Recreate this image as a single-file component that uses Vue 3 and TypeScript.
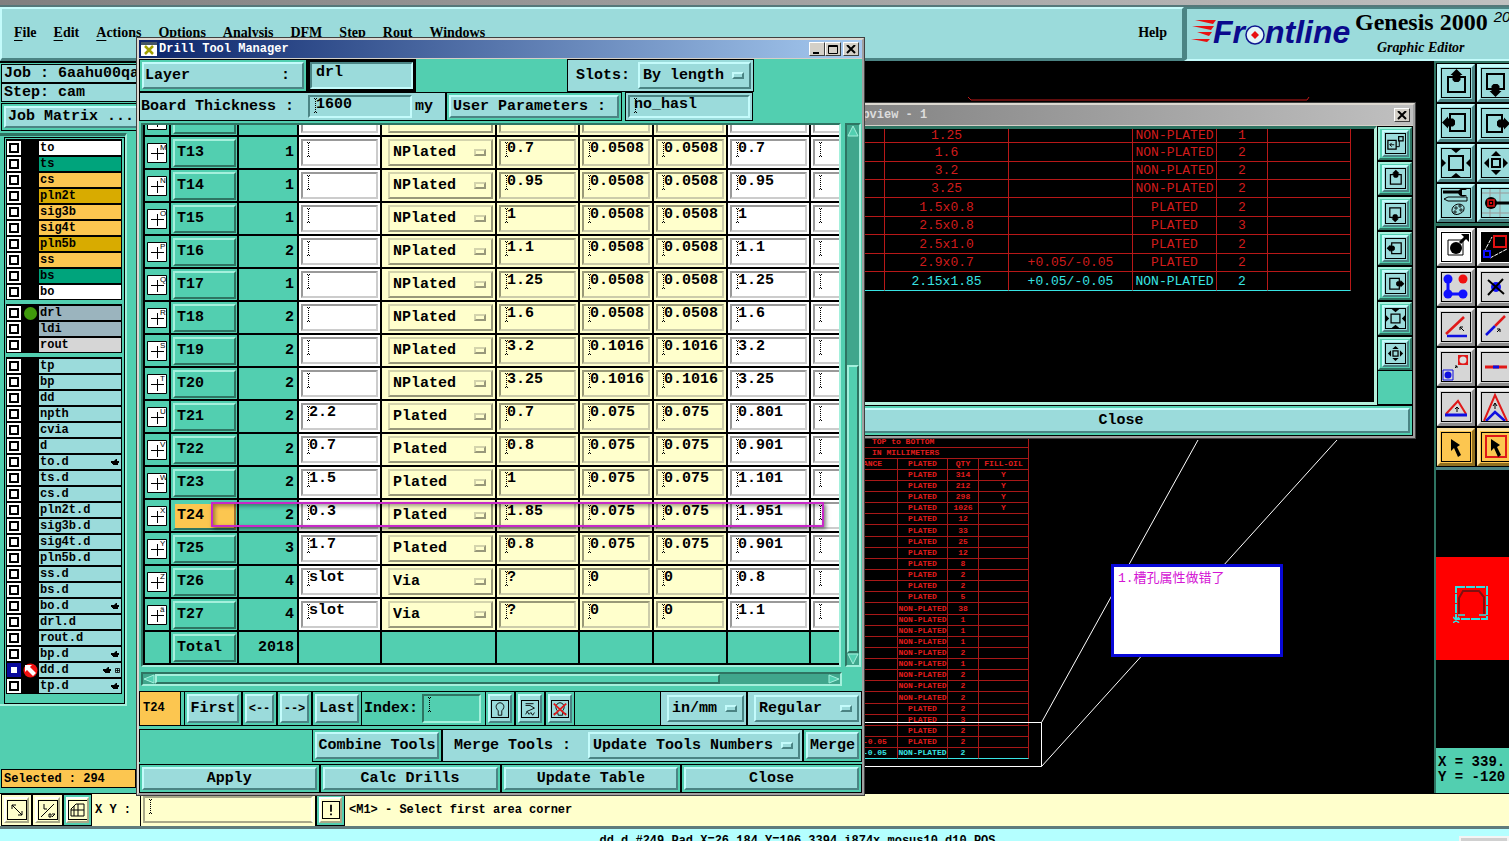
<script setup lang="ts">
import { reactive } from 'vue'

interface Layer { name: string; tone: string; mark?: string; hand?: boolean; grid?: boolean }
interface Drill { id: string; sym: string; count: number; a: string; type: string; b: string; c: string; d: string; e: string }

const menus = ['File', 'Edit', 'Actions', 'Options', 'Analysis', 'DFM', 'Step', 'Rout', 'Windows']

const groups: Layer[][] = [
  [
    { name: 'to', tone: 'white' }, { name: 'ts', tone: 'green' }, { name: 'cs', tone: 'amber' },
    { name: 'pln2t', tone: 'gold' }, { name: 'sig3b', tone: 'amber' }, { name: 'sig4t', tone: 'amber' },
    { name: 'pln5b', tone: 'gold' }, { name: 'ss', tone: 'amber' }, { name: 'bs', tone: 'green' },
    { name: 'bo', tone: 'white' },
  ],
  [
    { name: 'drl', tone: 'slate', mark: 'dot' }, { name: 'ldi', tone: 'slate' }, { name: 'rout', tone: 'gray' },
  ],
  [
    ...['tp', 'bp', 'dd', 'npth', 'cvia', 'd'].map((name) => ({ name, tone: 'aqua' })),
    { name: 'to.d', tone: 'aqua', hand: true },
    ...['ts.d', 'cs.d', 'pln2t.d', 'sig3b.d', 'sig4t.d', 'pln5b.d', 'ss.d', 'bs.d'].map((name) => ({ name, tone: 'aqua' })),
    { name: 'bo.d', tone: 'aqua', hand: true },
    { name: 'drl.d', tone: 'aqua' }, { name: 'rout.d', tone: 'aqua' },
    { name: 'bp.d', tone: 'aqua', hand: true },
    { name: 'dd.d', tone: 'aqua', mark: 'work', hand: true, grid: true },
    { name: 'tp.d', tone: 'aqua', hand: true },
  ],
]

const row = (id: string, sym: string, count: number, a: string, type: string, b: string, c: string, e: string): Drill =>
  ({ id, sym, count, a, type, b, c, d: c, e })

const drills = reactive<Drill[]>([
  row('T12', 'L', 1, '', 'NPlated', '', '', ''),
  row('T13', 'M', 1, '', 'NPlated', '0.7', '0.0508', '0.7'),
  row('T14', 'N', 1, '', 'NPlated', '0.95', '0.0508', '0.95'),
  row('T15', 'O', 1, '', 'NPlated', '1', '0.0508', '1'),
  row('T16', 'P', 2, '', 'NPlated', '1.1', '0.0508', '1.1'),
  row('T17', 'Q', 1, '', 'NPlated', '1.25', '0.0508', '1.25'),
  row('T18', 'R', 2, '', 'NPlated', '1.6', '0.0508', '1.6'),
  row('T19', 'S', 2, '', 'NPlated', '3.2', '0.1016', '3.2'),
  row('T20', 'T', 2, '', 'NPlated', '3.25', '0.1016', '3.25'),
  row('T21', 'U', 2, '2.2', 'Plated', '0.7', '0.075', '0.801'),
  row('T22', 'V', 2, '0.7', 'Plated', '0.8', '0.075', '0.901'),
  row('T23', 'W', 2, '1.5', 'Plated', '1', '0.075', '1.101'),
  row('T24', 'X', 2, '0.3', 'Plated', '1.85', '0.075', '1.951'),
  row('T25', 'Y', 3, '1.7', 'Plated', '0.8', '0.075', '0.901'),
  row('T26', 'Z', 4, 'slot', 'Via', '?', '0', '0.8'),
  row('T27', 'ä', 4, 'slot', 'Via', '?', '0', '1.1'),
])

const form = reactive({ layer: 'drl', thickness: '1600', user: 'no_hasl', slots: 'By length', index: '', units: 'in/mm', mode: 'Regular', update: 'Update Tools Numbers', xy: '' })

const preview = [
  ['1.25', '', 'NON-PLATED', '1'],
  ['1.6', '', 'NON-PLATED', '2'],
  ['3.2', '', 'NON-PLATED', '2'],
  ['3.25', '', 'NON-PLATED', '2'],
  ['1.5x0.8', '', 'PLATED', '2'],
  ['2.5x0.8', '', 'PLATED', '3'],
  ['2.5x1.0', '', 'PLATED', '2'],
  ['2.9x0.7', '+0.05/-0.05', 'PLATED', '2'],
  ['2.15x1.85', '+0.05/-0.05', 'NON-PLATED', '2'],
]

const P = 'PLATED'
const N = 'NON-PLATED'
const board: string[][] = [
  ['', P, '314', 'Y'], ['', P, '212', 'Y'], ['', P, '298', 'Y'], ['', P, '1026', 'Y'],
  ['', P, '12', ''], ['', P, '33', ''], ['', P, '25', ''], ['', P, '12', ''], ['', P, '8', ''],
  ['', P, '2', ''], ['', P, '2', ''], ['', P, '5', ''],
  ['', N, '38', ''], ['', N, '1', ''], ['', N, '1', ''], ['', N, '1', ''], ['', N, '2', ''],
  ['', N, '1', ''], ['', N, '2', ''], ['', N, '2', ''], ['', N, '2', ''],
  ['', P, '2', ''], ['', P, '3', ''], ['', P, '2', ''],
  ['+0.05/-0.05', P, '2', ''], ['+0.05/-0.05', N, '2', ''],
]

const panUp = '<path d="M7 9H24V24H7Z" fill="none" stroke="#000" stroke-width="2"/><path d="M15.500 1l6 6h-2v5l-2 2h-4l-2-2v-5h-2z"/>'
const turn = (deg: number) => `<g transform="rotate(${deg} 15 15)">${panUp}</g>`
const zoomIn = '<path d="M8 8H22V22H8Z" fill="none" stroke="#000" stroke-width="2"/><path d="M9 0h12l-6 5zM9 30h12l-6-5zM-1 9l6 6-6 6zM31 9l-6 6 6 6z"/>'
const zoomOut = '<path d="M11 11H19V19H11Z" fill="none" stroke="#000" stroke-width="2"/><path d="M10 8h10l-5-5zM10 22h10l-5 5zM8 10v10l-5-5zM22 10v10l5-5z"/>'
const cursor = '<path d="M10 7l9 6-3 2 4 8-3 2-4-9-3 3z"/>'

const viewTools = [
  { label: 'Pan up', icon: panUp },
  { label: 'Pan down', icon: turn(180) },
  { label: 'Pan left', icon: turn(-90) },
  { label: 'Pan right', icon: turn(90) },
  { label: 'Zoom in', icon: zoomIn },
  { label: 'Zoom out', icon: zoomOut },
  { label: 'Setup', icon: '<path d="M2 4h16" stroke="#000" stroke-width="3"/><path d="M26 2a5 4 0 1 0 0 5h-5v-5z"/><path d="M3 11l4-2h19v4H7z" fill="none" stroke="#000"/><path d="M12 19c4-5 12-3 11 2 0 3-3 4-5 5-5 2-9-2-6-7z" fill="none" stroke="#000"/><path d="M14 19h2v2h-2zM18 17h2v2h-2zM13 23h2v2h-2zM19 21h2v2h-2z" fill="none" stroke="#000" stroke-width=".8"/>' },
  { label: 'Snap', icon: '<path d="M9 0V30M19 0V30M0 5H30M0 25H30" stroke="#999" fill="none"/><path d="M10 15H32" stroke="#000" stroke-width="3"/><circle cx="10" cy="15" r="6"/><path d="M7 12h6v6h-6z" fill="none" stroke="#e01010" stroke-width="1.500"/><path d="M9 14h2v2h-2z" fill="#e01010"/>' },
]

const editTools = [
  { label: 'Move', tone: 'white', icon: '<path d="M7 8H22V23H7Z" fill="none" stroke="#000"/><circle cx="15" cy="16" r="6"/><path d="M19 11l6-6" stroke="#000" stroke-width="3"/><path d="M20 2h8v8z"/>' },
  { label: 'Resize', tone: 'dark', icon: '<path d="M0 0H30V30H0Z"/><path d="M3 20L11 5M9 26L26 17" stroke="#fff" stroke-dasharray="4 1"/><path d="M3 19H9V25H3Z" fill="none" stroke="#1010ff" stroke-width="2"/><path d="M13 4H25V15H13Z" fill="none" stroke="#e01010" stroke-width="2"/>' },
  { label: 'Copy', tone: 'gray', icon: '<path d="M7 7V22H22" fill="none" stroke="#1010ff" stroke-width="3"/><g fill="#1010ff"><circle cx="7" cy="7" r="4.500"/><circle cx="7" cy="22" r="4.500"/><circle cx="22" cy="22" r="4.500"/></g><circle cx="22" cy="7" r="4.500" fill="#f01010"/>' },
  { label: 'Delete', tone: 'gray', icon: '<circle cx="15" cy="15" r="5" fill="#1010ff"/><path d="M7 8L23 22M22 7L7 23" stroke="#000" stroke-width="2"/>' },
  { label: 'Angle', tone: 'gray', icon: '<path d="M5 22L23 5" stroke="#e01818" stroke-width="2.500"/><path d="M6 24H26" stroke="#1010e0" stroke-width="2.500"/><path d="M23 19l-4-4m0 3v-3h3" stroke="#000" fill="none"/>' },
  { label: 'Line', tone: 'gray', icon: '<path d="M14 14L24 4" stroke="#e01818" stroke-width="2.500"/><path d="M5 23L14 14" stroke="#1010e0" stroke-width="2.500"/><path d="M16 20l3-3m-3 0h3v3" stroke="#000" fill="none"/>' },
  { label: 'Replace', tone: 'gray', icon: '<path d="M17 3h10v10H17z" fill="#e01818"/><circle cx="22" cy="8" r="3.500" fill="#ddd"/><path d="M2 18h10v10H2z" fill="none" stroke="#1010e0"/><circle cx="7" cy="23" r="3.500" fill="#1010e0"/><path d="M14 16l2-2m-2 0h2v2" stroke="#000" fill="none"/>' },
  { label: 'Join', tone: 'gray', icon: '<path d="M4 15H26" stroke="#e01818" stroke-width="3"/><path d="M12 15H18" stroke="#1010e0" stroke-width="3"/>' },
  { label: 'Triangle', tone: 'gray', icon: '<path d="M5 22L17 9L25 22" fill="none" stroke="#e01818" stroke-width="2"/><path d="M4 23H26" stroke="#1010e0" stroke-width="3"/><path d="M16 20v-5m-2 2l2-2 2 2" stroke="#000" fill="none"/>' },
  { label: 'Stretch', tone: 'gray', icon: '<path d="M3 29L14 3L26 29" fill="none" stroke="#e01818" stroke-width="2"/><path d="M5 29L14 20L24 29" fill="none" stroke="#1010e0" stroke-width="2.500"/><path d="M14 17v-6m-2 3l2-3 2 3" stroke="#000" fill="none"/>' },
  { label: 'Select', tone: 'amber', icon: cursor },
  { label: 'Select area', tone: 'amber', icon: '<path d="M5 4H25V25H5Z" fill="none" stroke="#e01818" stroke-width="2"/>' + cursor },
]

const sideTools = [
  { label: 'Link view', icon: '<path d="M3 10H16V24H3ZM20 4H27V11H20Z" fill="none" stroke="#000" stroke-width="2"/><path d="M13 17H6m3-3l-3 3 3 3M16 20h5V11" fill="none" stroke="#000" stroke-width="1.500"/>' },
  { label: 'Up', icon: panUp }, { label: 'Down', icon: turn(180) },
  { label: 'Left', icon: turn(-90) }, { label: 'Right', icon: turn(90) },
  { label: 'Zoom view in', icon: zoomIn }, { label: 'Zoom view out', icon: zoomOut },
]

const navIcons = [
  { label: 'Highlight', icon: '<path d="M7 11C2 6 6 2 9 2s7 4 2 9v5H7z" fill="none" stroke="#000"/>' },
  { label: 'Clear path', icon: '<path d="M4 3h9M4 5h5l5 3-9 4M4 15l2-3 2 3 2-2 2 3 2-3" fill="none" stroke="#000"/>' },
  { label: 'Highlight off', icon: '<path d="M6 11C2 6 6 2 9 2s7 4 3 9v5H7zM2 14h3m8 0h3" fill="none" stroke="#000"/><path d="M2 3L16 16M16 3L2 16" stroke="#e01818" stroke-width="2"/>' },
]

const statusIcons = [
  { label: 'Diagonal', icon: '<path d="M4 4L14 14M4 8V4h4M14 10v4h-4" fill="none" stroke="#000"/>' },
  { label: 'Angle mode', icon: '<path d="M2 16L15 3M5 3v5h3M10 13h2v3h-2zM13 13h3M13 16l3-3" fill="none" stroke="#000"/>' },
  { label: 'Grid mode', icon: '<path d="M2 8l5-5h8v12H2zM2 9h13M9 3v12M5 5v10" fill="none" stroke="#000"/>' },
]

const fields = ['b', 'c', 'd', 'e'] as const
</script>

<template>
  <div class="app">
    <div class="os-strip"></div>
    <header class="header">
      <nav class="menubar" aria-label="Main menu">
        <button v-for="m in menus" :key="m" type="button" class="menu"><u>{{ m[0] }}</u>{{ m.slice(1) }}</button>
        <button type="button" class="menu help">Help</button>
      </nav>
      <div class="brand">
        <svg class="logo" width="164" height="40" viewBox="0 0 164 40" role="img" aria-label="Frontline">
          <g fill="#e81010">
            <path d="M4 5L25 5L22 9ZM1 11L23 11L20 15ZM6 17L21 17L18 21ZM0 24L19 24L16 27Z" />
          </g>
          <text x="22" y="28" class="logo-text">Fr</text>
          <circle cx="64" cy="20" r="9" fill="#e4f6f8" stroke="#101890" stroke-width="1.5" />
          <path d="M64 16l4 4-4 4-4-4z" fill="#e81010" />
          <text x="74" y="28" class="logo-text">ntline</text>
        </svg>
        <div class="product">
          <div class="product-name">Genesis 2000 <i>2000</i></div>
          <div class="product-sub">Graphic Editor</div>
        </div>
      </div>
    </header>

    <main class="main">
      <aside class="left">
        <div class="line-box">Job : 6aahu00qa</div>
        <div class="line-box">Step: cam</div>
        <div class="matrix-box"><button type="button" class="raised aqua matrix">Job Matrix ...</button></div>
        <div class="layers">
          <div class="layers-frame">
            <div v-for="(g, gi) in groups" :key="gi" class="group">
              <div v-for="l in g" :key="l.name" class="layer">
                <input type="checkbox" class="tick" :class="{ work: l.mark === 'work' }" :aria-label="'Display ' + l.name" />
                <span class="slot">
                  <svg v-if="l.mark === 'dot'" width="15" height="15" viewBox="0 0 15 15"><circle cx="7.5" cy="7.5" r="6.5" fill="#3f9a0c" /></svg>
                  <svg v-if="l.mark === 'work'" width="15" height="15" viewBox="0 0 15 15"><circle cx="7.5" cy="7.5" r="7" fill="#f01010" /><path d="M2 2h7l-2 2 6 6-3 3-6-6-2 2z" fill="#fff" /></svg>
                </span>
                <button type="button" class="lname" :class="l.tone">
                  <span>{{ l.name }}</span>
                  <svg v-if="l.hand" class="hand" width="8" height="8" viewBox="0 0 8 8"><path d="M0 3h3l2-2h1v2h2v2h-1v2h-5v-1h-1v-1h-1z" /></svg>
                  <svg v-if="l.grid" width="5" height="5" viewBox="0 0 5 5"><path d="M.5.5h4v4h-4zM.5 2.500h4M2.500.5v4" fill="none" stroke="#000" stroke-width=".8" /></svg>
                </button>
              </div>
            </div>
          </div>
        </div>
        <div class="selected">Selected : 294</div>
      </aside>

      <section class="canvas" aria-label="Board view">
        <table class="board">
          <colgroup><col class="w74" /><col class="w50" /><col class="w31" /><col class="w50" /></colgroup>
          <tbody>
            <tr><td colspan="4" class="cap">TOP to BOTTOM</td></tr>
            <tr><td colspan="4" class="cap">IN MILLIMETERS</td></tr>
            <tr><th>TOLERANCE</th><th>PLATED</th><th>QTY</th><th>FILL-OIL</th></tr>
            <tr v-for="(r, i) in board" :key="i" :class="{ hot: i === board.length - 1 }">
              <td v-for="(c, j) in r" :key="j">{{ c }}</td>
            </tr>
          </tbody>
        </table>
        <svg class="lines" width="1298" height="732" viewBox="0 0 1298 732" aria-hidden="true">
          <path d="M832 36l3 3H1171l2-3" fill="none" stroke="#c01818" />
          <path d="M700 661.5H905.5V705.5H700M905.5 661.5L1062 379M905.5 705.5L1201 379" fill="none" stroke="#fff" />
        </svg>
      </section>

      <aside class="right">
        <div class="tools">
          <button v-for="t in viewTools" :key="t.label" type="button" class="tool aqua" :aria-label="t.label">
            <svg class="framed" width="30" height="30" viewBox="1 1 28 28" v-html="t.icon"></svg>
          </button>
        </div>
        <div class="tools second">
          <button v-for="t in editTools" :key="t.label" type="button" class="tool" :class="t.tone" :aria-label="t.label">
            <svg class="framed" width="30" height="30" viewBox="1 1 28 28" v-html="t.icon"></svg>
          </button>
        </div>
        <div class="overview">
          <div class="overview-red">
            <svg width="40" height="40" viewBox="0 0 40 40">
              <path d="M3 4H34V36H3Z" fill="none" stroke="#30e0e0" stroke-width="2" stroke-dasharray="9 1" />
              <path d="M6 31V15L10 8H26L31 14V31" fill="none" stroke="#801010" stroke-width="2" />
              <path d="M5 32H12M26 32H33M0 40l6-6M0 34l6 6" fill="none" stroke="#30e0e0" stroke-width="1.5" />
            </svg>
          </div>
        </div>
        <div class="coords">X = 339.<br />Y = -120</div>
      </aside>
    </main>

    <footer class="status">
      <button v-for="(s, i) in statusIcons" :key="s.label" type="button" class="sbtn" :class="{ on: i === 2 }" :aria-label="s.label">
        <svg class="framed" width="20" height="20" viewBox="0 0 18 18" v-html="s.icon"></svg>
      </button>
      <label class="xy" for="xy">X Y :</label>
      <span class="xy-box"><input id="xy" v-model="form.xy" class="beam" type="text" /></span>
      <button type="button" class="sbtn on" aria-label="Alert">
        <svg class="framed" width="18" height="18" viewBox="0 0 18 18"><path d="M9 3v8M9 13v2" stroke="#000" stroke-width="2" /></svg>
      </button>
      <span class="message">&lt;M1&gt; - Select first area corner</span>
    </footer>
    <div class="info"><span>dd.d,#249,Pad,X=26.184,Y=106.3394,i874x,mosus10,d10,POS</span><i></i></div>

    <section class="window popview" aria-label="Popview - 1">
      <div class="titlebar inactive"><span class="title">Popview - 1</span>
        <button type="button" class="cap-btn" aria-label="Close popview"><svg width="10" height="9" viewBox="0 0 10 9"><path d="M1 0l8 8M9 0L1 8" stroke="#000" stroke-width="2" /></svg></button>
      </div>
      <div class="pop-body">
        <div class="pop-canvas">
          <table class="cad">
            <colgroup><col class="w53" /><col class="w124" /><col class="w124" /><col class="w84" /><col class="w51" /><col class="w83" /></colgroup>
            <tbody>
              <tr v-for="(r, i) in preview" :key="i" :class="{ hot: i === preview.length - 1 }">
                <td></td><td v-for="(c, j) in r" :key="j">{{ c }}</td><td></td>
              </tr>
            </tbody>
          </table>
        </div>
        <div class="side">
          <button v-for="t in sideTools" :key="t.label" type="button" class="side-btn" :aria-label="t.label">
            <span class="raised aqua"><svg class="framed" width="21" height="21" viewBox="0 0 30 30" v-html="t.icon"></svg></span>
          </button>
          <div class="side-fill"></div>
        </div>
      </div>
      <div class="pop-foot"><button type="button" class="raised aqua">Close</button></div>
    </section>

    <div class="note">1.槽孔属性做错了</div>

    <section class="window drill" aria-label="Drill Tool Manager">
      <div class="titlebar">
        <svg width="16" height="14" viewBox="0 0 16 14"><path d="M0 0h16v14H0z" fill="#fff" /><path d="M0 0h16v3H0z" fill="#456" /><path d="M4 4l8 8M12 4l-8 8" stroke="#a0a000" stroke-width="2.5" /></svg>
        <span class="title">Drill Tool Manager</span>
        <button type="button" class="cap-btn" aria-label="Minimize"><svg width="10" height="9" viewBox="0 0 10 9"><path d="M1 8h6" stroke="#000" stroke-width="2" /></svg></button>
        <button type="button" class="cap-btn" aria-label="Maximize"><svg width="10" height="9" viewBox="0 0 10 9"><path d="M.5.5h9v8h-9zM0 1.500h10" fill="none" stroke="#000" /></svg></button>
        <button type="button" class="cap-btn gap" aria-label="Close drill tool manager"><svg width="10" height="9" viewBox="0 0 10 9"><path d="M1 0l8 8M9 0L1 8" stroke="#000" stroke-width="2" /></svg></button>
      </div>

      <div class="frow first">
        <div class="cell layer-cell"><button type="button" class="raised aqua spread"><span>Layer</span><span>:</span></button></div>
        <div class="drl-box"><input v-model="form.layer" type="text" aria-label="Layer" class="sunk aqua" /></div>
        <div class="cell slots">
          <label for="slots">Slots:</label>
          <span class="pick aqua"><select id="slots" v-model="form.slots"><option>By length</option></select></span>
        </div>
      </div>
      <div class="frow">
        <div class="cell thick">
          <label for="thick">Board Thickness :</label>
          <input id="thick" v-model="form.thickness" type="text" class="sunk aqua beam" />
          <span>my</span>
        </div>
        <div class="cell user"><button type="button" class="raised aqua">User Parameters :</button></div>
        <div class="cell hasl"><input v-model="form.user" type="text" aria-label="User parameters" class="sunk aqua beam" /></div>
      </div>

      <div class="scroll-area">
        <div class="viewport">
          <table class="drills">
            <colgroup>
              <col class="w28" /><col class="w68" /><col class="w60" /><col class="w83" /><col class="w115" />
              <col class="w83" /><col class="w74" /><col class="w74" /><col class="w83" /><col class="w83" />
            </colgroup>
            <tbody>
              <tr v-for="d in drills" :key="d.id">
                <td class="sym">
                  <svg width="20" height="20" viewBox="0 0 20 20"><path d="M.5.5h19v19H.5z" fill="#fff" stroke="#000" /><path d="M4 10.500H17M10.500 5V17" stroke="#000" /><text x="13" y="7" class="glyph">{{ d.sym }}</text></svg>
                </td>
                <td><button type="button" class="tbtn" :class="{ picked: d.id === 'T24' }">{{ d.id }}</button></td>
                <td class="count">{{ d.count }}</td>
                <td class="pale"><input v-model="d.a" type="text" class="beam" :aria-label="d.id + ' name'" /></td>
                <td class="cream"><span class="pick cream"><select v-model="d.type" :aria-label="d.id + ' type'"><option>NPlated</option><option>Plated</option><option>Via</option></select></span></td>
                <td v-for="f in fields" :key="f" :class="f === 'e' ? 'pale' : 'cream'"><input v-model="d[f]" type="text" class="beam" :aria-label="d.id + ' size ' + f" /></td>
                <td class="pale"><input type="text" class="beam" :aria-label="d.id + ' extra'" /></td>
              </tr>
              <tr>
                <td></td><td><button type="button" class="tbtn">Total</button></td><td class="count">2018</td>
                <td v-for="n in 7" :key="n"></td>
              </tr>
            </tbody>
          </table>
          <div class="marker"></div>
        </div>
        <div class="vbar">
          <svg width="12" height="12" viewBox="0 0 12 12"><path d="M6 1L11 11H1Z" class="tri" /></svg>
          <div class="vthumb"></div>
          <svg width="12" height="12" viewBox="0 0 12 12"><path d="M6 11L11 1H1Z" class="tri" /></svg>
        </div>
      </div>
      <div class="hbar">
        <svg width="12" height="10" viewBox="0 0 12 10"><path d="M1 5L11 1V9Z" class="tri" /></svg>
        <div class="hthumb"></div>
        <svg width="12" height="10" viewBox="0 0 12 10"><path d="M11 5L1 1V9Z" class="tri" /></svg>
      </div>

      <div class="nav">
        <div class="current">T24</div>
        <div class="bx b58"><button type="button" class="raised aqua">First</button></div>
        <div class="bx b34"><button type="button" class="raised aqua small">&lt;--</button></div>
        <div class="bx b34"><button type="button" class="raised aqua small">--&gt;</button></div>
        <div class="bx b50"><button type="button" class="raised aqua">Last</button></div>
        <label for="idx" class="index">Index:</label>
        <input id="idx" v-model="form.index" type="text" class="sunk teal beam idx" />
        <div v-for="n in navIcons" :key="n.label" class="bx b30">
          <button type="button" class="raised aqua" :aria-label="n.label"><svg class="framed" width="18" height="18" viewBox="0 0 18 18" v-html="n.icon"></svg></button>
        </div>
        <div class="bx units"><span class="pick aqua"><select v-model="form.units" aria-label="Units"><option>in/mm</option></select></span></div>
        <div class="bx mode"><span class="pick aqua"><select v-model="form.mode" aria-label="Mode"><option>Regular</option></select></span></div>
      </div>

      <div class="merge">
        <div class="blank"></div>
        <div class="bx combine"><button type="button" class="raised aqua">Combine Tools</button></div>
        <div class="bx merge-box">
          <label for="upd">Merge Tools :</label>
          <span class="pick aqua"><select id="upd" v-model="form.update"><option>Update Tools Numbers</option></select></span>
        </div>
        <div class="bx b59"><button type="button" class="raised aqua">Merge</button></div>
      </div>

      <div class="actions">
        <div v-for="a in ['Apply', 'Calc Drills', 'Update Table', 'Close']" :key="a" class="bx"><button type="button" class="raised aqua">{{ a }}</button></div>
      </div>
    </section>
  </div>
</template>

<style>
html, body { margin: 0; overflow: hidden; background: #000; }
</style>

<style scoped>
.app, .app *, .app *::before, .app *::after { box-sizing: border-box; }
.app {
  position: relative; display: flex; flex-direction: column; height: 100vh; overflow: hidden;
  font: bold 15px/18px "Liberation Mono", "Noto Sans CJK SC", monospace; color: #000;
}
button, input, select { font: inherit; color: inherit; padding: 0; margin: 0; border-radius: 0; outline: none; }
button { display: flex; align-items: center; justify-content: center; white-space: nowrap; }
svg { display: block; flex: none; }

.raised { border: 2px solid; border-color: #c4fbfb #4b8484 #4b8484 #c4fbfb; }
.sunk { border: 2px solid; border-color: #4b8484 #c4fbfb #c4fbfb #4b8484; }
.aqua { background: #9bdbdb; }
.teal { background: #52cfb0; }
.framed { border: 1px solid #000; overflow: hidden; }
.beam {
  background-image:
    repeating-linear-gradient(#000 0 1px, transparent 1px 2px),
    linear-gradient(90deg, #000 0 1px, transparent 1px 2px, #000 2px),
    linear-gradient(90deg, #000 0 1px, transparent 1px 2px, #000 2px);
  background-size: 1px 13px, 3px 1px, 3px 1px;
  background-position: 5px 2px, 4px 1px, 4px 15px;
  background-repeat: no-repeat;
}

.os-strip { flex: none; height: 7px; background: linear-gradient(90deg, #808080, #c0c0c0); border-bottom: 2px solid #55787a; }
.header { flex: none; display: flex; height: 54px; background: #9bdbdb; }
.menubar { flex: 1; display: flex; align-items: center; gap: 17px; padding: 0 15px 2px 12px; border: 2px solid; border-color: #c4fbfb #4b8484 #4b8484 #c4fbfb; border-bottom-width: 3px; }
.menu { border: 0; background: none; font: bold 14px/18px "Liberation Serif", serif; display: inline; }
.menu u { text-underline-offset: 3px; }
.help { margin-left: auto; }
.brand { width: 325px; flex: none; display: flex; border: 2px solid; border-color: #4b8484 #9bdbdb #c4fbfb #4b8484; border-right: 0; overflow: hidden; padding-left: 4px; border-left-width: 3px; }
.logo { margin-top: 6px; }
.logo-text { font: italic bold 32px "Liberation Sans", sans-serif; fill: #0a0a8c; }
.product { font-family: "Liberation Serif", serif; white-space: nowrap; flex: none; width: 170px; }
.product-name { font-size: 24px; line-height: 26px; display: flex; gap: 6px; }
.product-name i { font: italic 15px/16px "Liberation Sans", sans-serif; }
.product-sub { font-style: italic; font-size: 14px; line-height: 26px; padding-left: 22px; }

.main { flex: 1; display: flex; min-height: 0; }
.left { width: 136px; flex: none; display: flex; flex-direction: column; background: #52cfb0; border-top: 2px solid #000; padding-top: 1px; white-space: nowrap; overflow: hidden; }
.line-box { flex: none; height: 19px; margin-left: 1px; padding-left: 2px; border: 1px solid #000; border-right: 0; background: #9bdbdb; }
.matrix-box { flex: none; height: 28px; margin: 1px 0 0 1px; border: 1px solid #000; border-right: 0; padding: 2px; }
.matrix { width: 160px; height: 22px; justify-content: flex-start; padding-left: 2px; }
.layers { margin-top: 2px; padding: 1px 0 0 4px; border-top: 3px solid #2e7462; border-left: 3px solid #2e7462; margin-left: -3px; width: 130px; border-right: 2px solid #a4f0dc; border-bottom: 2px solid #a4f0dc; flex: none; }
.layers-frame { border: 1px solid #000; padding: 1px 2px 9px 1px; display: flex; flex-direction: column; gap: 4px; }
.group { background: #000; padding: 1px 1px 0; }
.layer { height: 16px; display: flex; align-items: center; }
.tick { appearance: none; width: 14px; height: 14px; background: #fff; position: relative; }
.tick::before { content: ""; position: absolute; inset: 2px; border: 2px solid #000; }
.tick.work { background: #0a0a9c; }
.tick.work::before { border-color: #0a0a9c; background: #fff; }
.slot { width: 18px; display: flex; justify-content: center; }
.lname { flex: 1; height: 14px; border: 0; justify-content: flex-start; font-size: 12px; line-height: 14px; padding-left: 1px; padding-right: 1px; gap: 3px; }
.hand { margin-left: auto; margin-right: 1px; }
.white { background: #fff; }
.green { background: #00a47c; }
.amber { background: #fcc650; }
.gold { background: #d8ab00; }
.slate { background: #9bb4be; }
.gray { background: #d6d6d6; }
.selected { margin: auto 0 5px 1px; height: 19px; border: 1px solid #000; background: #fcc650; font-size: 12px; line-height: 18px; padding-left: 2px; }

.canvas { flex: 1; position: relative; background: #000; overflow: hidden; }
.lines { position: absolute; left: 0; top: 0; }
.board { position: absolute; left: 688px; top: 376px; width: 205px; table-layout: fixed; border-collapse: separate; border-spacing: 0; color: #e01c1c; font-size: 8px; line-height: 10px; text-align: center; white-space: nowrap; }
.board td, .board th { height: 11px; padding: 0; border-right: 1px solid #a81818; border-bottom: 1px solid #a81818; font-weight: bold; }
.board tr:nth-child(9) td, .board tr:nth-child(16) td, .board tr:nth-child(24) td { height: 12px; }
.board .cap { text-align: left; padding-left: 48px; }
.board .hot td, .cad .hot td { color: #38e4e4; border-bottom-color: #38e4e4; }
.w28 { width: 28px; } .w31 { width: 31px; } .w50 { width: 50px; } .w51 { width: 51px; } .w53 { width: 53px; }
.w60 { width: 60px; } .w68 { width: 68px; } .w74 { width: 74px; } .w83 { width: 83px; } .w84 { width: 84px; }
.w115 { width: 115px; } .w124 { width: 124px; }

.right { width: 75px; flex: none; background: #2e7462; overflow: hidden; display: flex; flex-direction: column; border-left: 2px solid #2e7462; padding-top: 2px; }
.tools { width: 82px; display: grid; grid-template-columns: 38px 38px; gap: 2px; background: #000; padding: 1px; }
.second { margin-top: 3px; padding-top: 2px; }
.tool { width: 38px; height: 38px; border: 3px solid; border-color: #c4fbfb #4b8484 #4b8484 #c4fbfb; }
.tool.gray, .tool.white, .tool.dark { border-color: #f4f4f4 #8c8c8c #8c8c8c #f4f4f4; }
.tool.dark { background: #fff; }
.tool.amber { border-color: #ffe4a0 #907020 #907020 #ffe4a0; }
.overview { flex: 1; border-top: 3px solid #4b8484; background: #000; padding-top: 87px; }
.overview-red { height: 103px; background: #f00; padding: 26px 17px; }
.coords { flex: none; height: 45px; background: #52cfb0; font-size: 14px; line-height: 15px; padding: 7px 2px; white-space: nowrap; }

.status { flex: none; height: 33px; display: flex; align-items: center; background: #ffc; font-size: 12px; border-top: 1px solid #000; padding-left: 1px; }
.sbtn { width: 31px; height: 32px; border: 1px solid #000; background: #ffc; position: relative; }
.sbtn::before { content: ""; position: absolute; inset: 2px; border: 2px solid; border-color: #fff #a8a888 #a8a888 #fff; }
.sbtn.on { background: #ffc; box-shadow: inset 0 0 0 2px #52cfb0; width: 29px; }
.xy { width: 48px; padding-left: 3px; }
.xy-box { width: 176px; height: 32px; border-left: 1px solid #000; border-right: 1px solid #000; padding: 2px; }
.xy-box input { width: 100%; height: 27px; border: 2px solid; border-color: #a8a888 #ffffee #a8a888 #a8a888; background-color: #ffc; }
.message { padding-left: 4px; }
.info { flex: none; height: 15px; background: #b4ffff; border-top: 3px solid #607c7c; font-size: 12px; line-height: 14px; padding: 5px 0 0 86px; overflow: hidden; display: flex; justify-content: center; position: relative; white-space: nowrap; }
.info i { position: absolute; right: 0; top: 7px; width: 50px; height: 10px; background: #d0d0d0; border: 2px solid #f4f4f4; }

.window { position: absolute; border: 3px solid; border-color: #dcd8d0 #a0a0a0 #a0a0a0 #dcd8d0; outline: 1px solid #404040; outline-offset: -1px; }
.titlebar { height: 19px; display: flex; align-items: center; background: linear-gradient(90deg, #0a246a, #a6caf0); color: #fff; padding: 0 3px 0 2px; border-bottom: 1px solid #d4d0c8; }
.title { flex: 1; font-size: 12px; line-height: 18px; padding-left: 2px; white-space: pre; }
.inactive { background: linear-gradient(90deg, #808080, #c0c0c0); color: #dcdcdc; height: 21px; }
.inactive .title { padding-left: 17px; }
.cap-btn { width: 16px; height: 14px; background: #d4d0c8; border: 1px solid; border-color: #fff #404040 #404040 #fff; }
.cap-btn.gap { margin-left: 2px; }

.popview { left: 826px; top: 102px; width: 590px; height: 337px; display: flex; flex-direction: column; background: #52cfb0; }
.pop-body { flex: 1; display: flex; min-height: 0; }
.pop-canvas { flex: 1; background: #000; border: 3px solid; border-color: #2e7462 #b4f0dc #b4f0dc #2e7462; overflow: hidden; display: flex; align-items: flex-start; }
.cad { table-layout: fixed; width: 519px; flex: none; border-collapse: separate; border-spacing: 0; color: #d01c1c; font-size: 13px; line-height: 15px; font-weight: normal; text-align: center; white-space: nowrap; }
.cad td { height: 18px; padding: 0; border-right: 1px solid #b81818; border-bottom: 1px solid #b81818; }
.cad tr:first-child td { height: 14px; line-height: 13px; }
.cad tr:nth-child(2) td, .cad tr:nth-child(5) td, .cad tr:nth-child(7) td, .cad tr:nth-child(9) td { height: 19px; }
.side { width: 36px; flex: none; display: flex; flex-direction: column; gap: 2px; background: #000; border: 1px solid #000; }
.side-btn { height: 33px; flex: none; background: #52cfb0; border: 2px solid; border-color: #a4f0dc #2e7462 #2e7462 #a4f0dc; }
.side-btn span { padding: 1px; }
.side-fill { flex: 1; background: #52cfb0; margin-top: -1px; }
.pop-foot { height: 31px; flex: none; padding: 2px; border: 1px solid #000; }
.pop-foot button { width: 100%; height: 25px; }

.note { position: absolute; left: 1111px; top: 564px; width: 172px; height: 93px; border: 3px solid #0808d8; background: #fff; color: #d414d4; font-weight: normal; font-size: 13px; line-height: 16px; padding: 4px; }

.drill { left: 136px; top: 37px; width: 729px; background: #52cfb0; }
.frow { display: flex; height: 29px; }
.frow.first { height: 33px; }
.cell, .bx { border: 1px solid #000; background: #9bdbdb; padding: 2px; display: flex; align-items: center; white-space: nowrap; }
.bx > button, .cell > button { flex: 1; height: 100%; }
.bx { background: #52cfb0; padding: 2px; }
.layer-cell { width: 168px; background: #52cfb0; }
.spread { justify-content: space-between; padding: 0 12px 0 1px; }
.drl-box { width: 109px; border: 3px solid #000; }
.drl-box input { width: 100%; height: 100%; padding: 0 0 6px 4px; }
.slots { margin-left: 151px; width: 187px; padding-left: 8px; justify-content: space-between; }
.thick { width: 307px; padding: 2px 12px 2px 1px; gap: 3px; }
.thick input { width: 104px; height: 23px; padding: 0 0 4px 6px; margin-left: auto; }
.user { width: 176px; background: #52cfb0; }
.cell.user > button { justify-content: flex-start; padding-left: 2px; }
.hasl { width: 128px; margin-left: 3px; }
.hasl input { width: 100%; height: 23px; padding: 0 0 4px 4px; }
.pick { position: relative; display: flex; height: 27px; border: 2px solid; border-color: #c4fbfb #4b8484 #4b8484 #c4fbfb; }
.pick select { appearance: none; border: 0; background: none; width: 100%; padding-left: 3px; padding-right: 24px; }
.pick::after { content: ""; position: absolute; right: 5px; top: 8px; width: 12px; height: 7px; border: 2px solid; border-color: #c4fbfb #4b8484 #4b8484 #c4fbfb; pointer-events: none; }
.pick.cream, .pick.cream::after { border-color: #d4d4ac #98987a #98987a #d4d4ac; }

.scroll-area { display: flex; justify-content: space-between; margin: 2px 1px 0 2px; }
.viewport { position: relative; flex: 1; height: 544px; border: 2px solid; border-color: #2e7462 #a4f0dc #a4f0dc #2e7462; overflow: hidden; display: flex; align-items: flex-end; }
.drills { flex: none; width: 751px; table-layout: fixed; border-collapse: separate; border-spacing: 0; }
.drills td { height: 33px; padding: 0 2px; border-right: 2px solid #000; border-bottom: 2px solid #000; }
.drills td:first-child { border-left: 2px solid #000; }
.drills input { display: block; width: 100%; height: 27px; border: 2px solid; border-color: #999 #ccc #ccc #999; background-color: #fff; padding: 0 0 8px 6px; }
.cream { background: #ffc; }
.drills .cream input { background-color: #ffc; border-color: #999978 #ccccaa #ccccaa #999978; }
.drills td.pale { background: #fff; }
.drills .pick { margin-left: 4px; }
.glyph { font: 8px "Liberation Sans", sans-serif; }
.drills td.count { text-align: right; padding-right: 3px; font-weight: bold; }
.tbtn { width: 63px; height: 28px; justify-content: flex-start; padding-left: 2px; background: #52cfb0; border: 2px solid; border-color: #a4f0dc #2e7462 #2e7462 #a4f0dc; }
.tbtn.picked { background: #fcc650; border-color: #52cfb0 #a07030 #2e7462 #52cfb0; }
.marker { position: absolute; left: 68px; top: 377px; width: 613px; height: 25px; border: 2px solid #c828c8; box-shadow: 2px 2px 4px rgba(0, 0, 0, .5), inset 2px 2px 4px rgba(0, 0, 0, .4); pointer-events: none; }
.vbar { width: 16px; margin-left: 4px; border: 2px solid; border-color: #2e7462 #a4f0dc #a4f0dc #2e7462; background: #40a68c; display: flex; flex-direction: column; justify-content: space-between; }
.vthumb { height: 288px; margin-top: auto; background: #52cfb0; border: 2px solid; border-color: #a4f0dc #2e7462 #2e7462 #a4f0dc; }
.hbar { height: 14px; margin: 5px 20px 0 2px; border: 2px solid; border-color: #2e7462 #a4f0dc #a4f0dc #2e7462; background: #40a68c; display: flex; justify-content: space-between; }
.hthumb { width: 565px; margin-right: auto; background: #52cfb0; border: 2px solid; border-color: #a4f0dc #2e7462 #2e7462 #a4f0dc; }
.tri { fill: #52cfb0; stroke: #a4f0dc; }

.nav { display: flex; height: 35px; margin-top: 5px; border: 1px solid #000; }
.nav > .bx { margin: -1px 0; }
.current { width: 41px; background: #fcc650; border-right: 1px solid #000; font-size: 12px; line-height: 33px; padding-left: 3px; margin-right: 3px; }
.small { font-size: 12px; }
.b58 { width: 58px; } .b34 { width: 35px; } .b50 { width: 50px; } .b30 { width: 30px; } .b59 { width: 59px; }
.index { align-self: center; padding: 0 4px 0 2px; }
.idx { width: 59px; height: 29px; align-self: center; margin-right: 4px; border-color: #2e7462 #a4f0dc #a4f0dc #2e7462; }
.units { width: 87px; background: #9bdbdb; padding-left: 6px; }
.mode { width: 115px; background: #9bdbdb; padding-left: 6px; }
.nav .units { margin-left: auto; }
.nav .mode { margin-right: -1px; }
.units .pick, .mode .pick { flex: 1; }
.merge { display: flex; height: 33px; margin-top: 3px; }
.blank { flex: 1; border-top: 1px solid #000; border-left: 1px solid #000; }
.combine { width: 130px; }
.merge-box { width: 361px; background: #9bdbdb; padding-left: 11px; justify-content: space-between; }
.actions { display: grid; grid-template-columns: repeat(4, 1fr); height: 29px; margin-top: 2px; }
</style>
